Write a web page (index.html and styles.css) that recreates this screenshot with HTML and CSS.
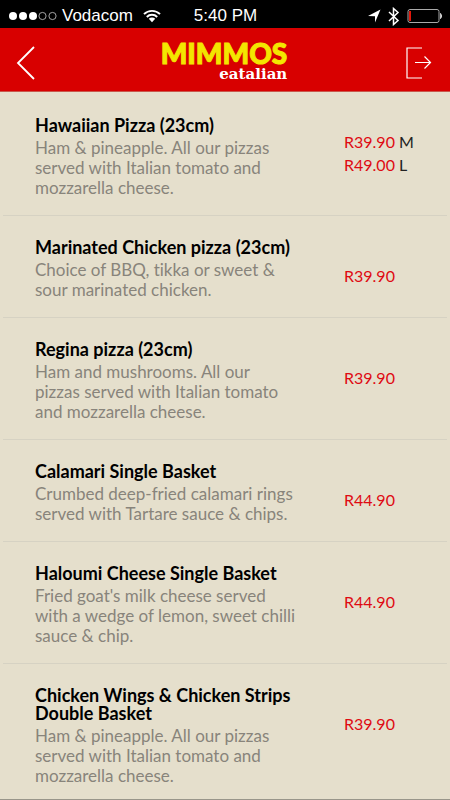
FILE: index.html
```html
<!DOCTYPE html>
<html lang="en">
<head>
<meta charset="utf-8">
<meta name="viewport" content="width=device-width, initial-scale=1">
<title>Mimmos eatalian</title>
<link rel="stylesheet" href="styles.css">
</head>
<body>
<div class="status">
  <div class="status-left">
    <svg width="49" height="12" viewBox="0 0 49 12" aria-hidden="true">
      <g fill="#fff"><circle cx="5" cy="6" r="4"/><circle cx="15" cy="6" r="4"/><circle cx="25" cy="6" r="4"/></g>
      <g fill="none" stroke="#ccc" stroke-width=".8"><circle cx="34.500" cy="6" r="3.600"/><circle cx="44.500" cy="6" r="3.600"/></g>
    </svg>
    <span class="carrier">Vodacom</span>
    <svg width="18" height="14" viewBox="0 0 18 14" aria-hidden="true">
      <g fill="none" stroke="#fff" stroke-width="1.900"><path d="M1 5.200a11.300 11.300 0 0 1 16 0"/><path d="M3.800 8a7.300 7.300 0 0 1 10.400 0"/></g>
      <path d="M5.800 9.800a4.500 4.500 0 0 1 6.400 0L9 13.200z" fill="#fff"/>
    </svg>
  </div>
  <span class="clock">5:40 PM</span>
  <div class="status-right">
    <svg width="14" height="14" viewBox="0 0 14 14" aria-hidden="true"><path d="M13.500.500L8 13.500V7.200L1 7z" fill="#fff"/></svg>
    <svg width="12" height="19" viewBox="0 0 12 19" aria-hidden="true"><path d="M1 5l9 8.500-4.500 4V1.500l4.500 4L1 14" fill="none" stroke="#fff" stroke-width="1.500"/></svg>
    <svg width="36" height="16" viewBox="0 0 36 16" aria-hidden="true">
      <rect x="1" y="1.500" width="31" height="13" rx="2" fill="none" stroke="#aaa"/>
      <rect x="2" y="3" width="2" height="10" fill="#e3170a"/>
      <path d="M33.500 5.200q2.500 2.800 0 5.600z" fill="#fff" stroke="#fff" stroke-width=".5"/>
    </svg>
  </div>
</div>
<header class="bar">
  <button class="icon-button" type="button" aria-label="Back">
    <svg width="20" height="34" viewBox="0 0 20 34" aria-hidden="true"><path d="M18 1L2 17l16 16" fill="none" stroke="#fff" stroke-width="1.800"/></svg>
  </button>
  <h1 class="logo">
    <span class="logo-name">MIMMOS</span>
    <span class="logo-sub">eatalian</span>
  </h1>
  <button class="icon-button icon-button-end" type="button" aria-label="Log out">
    <svg width="26" height="32" viewBox="0 0 26 32" aria-hidden="true"><path d="M16 1H1v30h15M9 15.500h16M18.500 9.500l6 6-6 6" fill="none" stroke="#fff" stroke-width="1.200"/></svg>
  </button>
</header>
<main>
  <ul class="menu">
    <li class="item">
      <div class="info"><h2>Hawaiian Pizza (23cm)</h2><p>Ham &amp; pineapple. All our pizzas<br>served with Italian tomato and<br>mozzarella cheese.</p></div>
      <div class="prices"><span>R39.90 <b>M</b></span><span>R49.00 <b>L</b></span></div>
    </li>
    <li class="item">
      <div class="info"><h2>Marinated Chicken pizza (23cm)</h2><p>Choice of BBQ, tikka or sweet &amp;<br>sour marinated chicken.</p></div>
      <div class="prices"><span>R39.90</span></div>
    </li>
    <li class="item">
      <div class="info"><h2>Regina pizza (23cm)</h2><p>Ham and mushrooms. All our<br>pizzas served with Italian tomato<br>and mozzarella cheese.</p></div>
      <div class="prices"><span>R39.90</span></div>
    </li>
    <li class="item">
      <div class="info"><h2>Calamari Single Basket</h2><p>Crumbed deep-fried calamari rings<br>served with Tartare sauce &amp; chips.</p></div>
      <div class="prices"><span>R44.90</span></div>
    </li>
    <li class="item">
      <div class="info"><h2>Haloumi Cheese Single Basket</h2><p>Fried goat's milk cheese served<br>with a wedge of lemon, sweet chilli<br>sauce &amp; chip.</p></div>
      <div class="prices"><span>R44.90</span></div>
    </li>
    <li class="item">
      <div class="info"><h2>Chicken Wings &amp; Chicken Strips<br>Double Basket</h2><p>Ham &amp; pineapple. All our pizzas<br>served with Italian tomato and<br>mozzarella cheese.</p></div>
      <div class="prices"><span>R39.90</span></div>
    </li>
  </ul>
</main>
</body>
</html>
```
FILE: styles.css
```css
* { box-sizing: border-box; }
body {
  margin: 0;
  background: #e5dfcc;
  color: #000;
  font-family: Lato, sans-serif;
  font-variant-ligatures: none;
}
svg { display: block; flex: none; }
h1, h2, p, ul { margin: 0; padding: 0; }

.status {
  display: grid;
  grid-template-columns: 1fr auto 1fr;
  align-items: center;
  height: 28px;
  padding: 4px 7px 0 8px;
  background: #000;
  color: #fff;
  font: 17px/24px "Liberation Sans", sans-serif;
}
.status-left, .status-right { display: flex; align-items: center; }
.status-left { gap: 5px; }
.carrier { margin-right: 5px; }
.status-right { justify-content: flex-end; gap: 7px; }

.bar {
  display: grid;
  grid-template-columns: 1fr auto 1fr;
  align-items: center;
  height: 64px;
  padding: 0 18px 0 16px;
  background: #d80000;
  border-bottom: 1px solid #c9584c;
}
.icon-button {
  justify-self: start;
  padding: 6px 0 0;
  border: 0;
  background: none;
}
.icon-button-end { justify-self: end; }
.logo {
  display: flex;
  flex-direction: column;
  align-items: flex-end;
  padding-top: 2px;
}
.logo-name {
  color: #f3e600;
  font-size: 28px;
  font-weight: 900;
  line-height: 26px;
  -webkit-text-stroke: 1px #f3e600;
}
.logo-sub {
  color: #fff;
  font: bold 15px/16px "DejaVu Serif", serif;
}

.menu { padding-top: 2px; list-style: none; }
.item {
  display: flex;
  margin: 0 3px;
  padding: 22px 0 17px 32px;
  border-bottom: 1px solid #d6d2c3;
}
.item:last-child { margin: 0; padding-left: 35px; padding-right: 3px; padding-bottom: 13px; border-color: #99968a; }
.info { flex: 1; }
h2 {
  margin-bottom: 4px;
  font-size: 18px;
  font-weight: 700;
  line-height: 18px;
}
p {
  color: #88847b;
  font-size: 17px;
  line-height: 20px;
}
.prices {
  display: flex;
  flex-direction: column;
  justify-content: center;
  flex: none;
  width: 25%;
  height: 46px;
  margin-top: 14px;
  color: #df0a12;
  font-size: 16px;
  line-height: 23px;
}
.prices b { color: #222; font-weight: 400; }
```
